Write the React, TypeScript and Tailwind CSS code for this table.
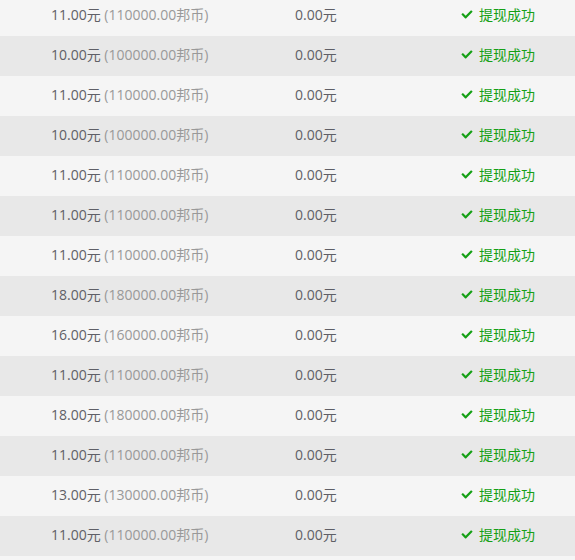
import React from "react";
import { FaCheck } from "react-icons/fa";

const rows: [string, string][] = [
  ["11.00", "110000.00"],
  ["10.00", "100000.00"],
  ["11.00", "110000.00"],
  ["10.00", "100000.00"],
  ["11.00", "110000.00"],
  ["11.00", "110000.00"],
  ["11.00", "110000.00"],
  ["18.00", "180000.00"],
  ["16.00", "160000.00"],
  ["11.00", "110000.00"],
  ["18.00", "180000.00"],
  ["11.00", "110000.00"],
  ["13.00", "130000.00"],
  ["11.00", "110000.00"],
];

export default function App() {
  return (
    <div
      className="w-[575px] h-[560px] overflow-hidden bg-[#f5f5f5] text-[14px]"
      style={{ fontFamily: '"Open Sans", "Noto Sans CJK SC", sans-serif' }}
    >
      <div className="-mt-[4px]">
        {rows.map(([a, b], i) => (
          <div
            key={i}
            className={`flex items-center h-[40px] pb-[3px] ${i % 2 === 0 ? "bg-[#f5f5f5]" : "bg-[#e8e8e8]"}`}
          >
            <div className="w-[295px] pl-[51px] whitespace-nowrap text-[#5f5f66]">
              {a}元 <span className="text-[#999]">({b}邦币)</span>
            </div>
            <div className="w-[166px] whitespace-nowrap text-[#5f5f66]">0.00元</div>
            <div className="flex items-center gap-[6px] whitespace-nowrap text-[#15a015]">
              <FaCheck className="w-[12px] h-[11px]" />
              <span>提现成功</span>
            </div>
          </div>
        ))}
      </div>
    </div>
  );
}
